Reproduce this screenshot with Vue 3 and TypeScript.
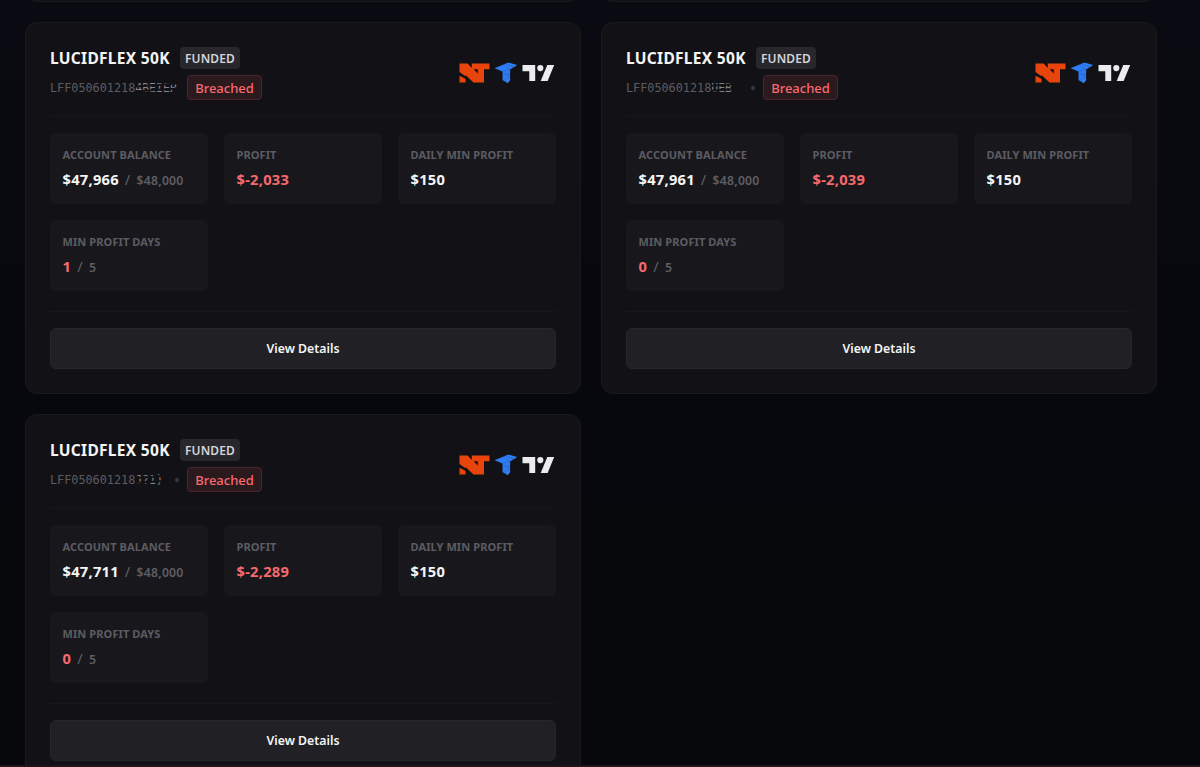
<template>
  <div class="page">
    <div class="grid previous-row">
      <div class="card"></div>
      <div class="card"></div>
    </div>

    <div class="grid">
      <div v-for="account in accounts" :key="account.id" class="card">
        <div class="card-header">
          <div class="account-info">
            <div class="title-row">
              <h3>LUCIDFLEX 50K</h3>
              <span class="stage-badge">FUNDED</span>
            </div>
            <div class="id-row">
              <span class="account-id">LFF050601218</span>
              <span class="masked-id">{{ account.masked }}</span>
              <span v-if="account.showDot" class="dot"></span>
              <span class="status-badge">Breached</span>
            </div>
          </div>

          <div class="platforms">
            <svg width="31" height="20" viewBox="0 0 31 20">
              <path
                fill="#e8440c"
                fill-rule="evenodd"
                d="M.5.5h8l4.3 4.2V.5h17.7v5.8H25v13.2H14.6L6.4 12v1.3L.5 9zM15.2 6.3v.6l3.6 3.6V6.3zM.5 12.8l6 3v3.7h-6z"
              />
            </svg>
            <svg width="24" height="22" viewBox="0 0 24 22">
              <path fill="#2f7df4" d="M.5 6.3 14.5.6l8.8 2.5-7.2 4.5v10.6l-2.2 3.1-5.4-3.2V9.4z" />
              <path
                fill="none"
                stroke="#1f5fc4"
                stroke-width=".6"
                d="M8.5 9.4l7.6-1.8-7-4.8M8.5 13.6l7.6-2M8.5 9.4l7.6 5.2M8.5 18.1l7.6-3.5M11.5 1.9l8.4 3.3"
              />
            </svg>
            <svg width="33" height="18" viewBox="0 0 33 18">
              <path fill="#ececee" d="M.5 1h12.7v16H7.3V7.2H.5zM25.3 1h6.9l-6.6 16h-6.9z" />
              <circle cx="18.3" cy="4.1" r="3.1" fill="#ececee" />
            </svg>
          </div>
        </div>

        <div class="stats">
          <div class="stat">
            <div class="stat-label">ACCOUNT BALANCE</div>
            <div class="stat-value">
              {{ account.balance }}<span class="slash">/</span><span class="limit">$48,000</span>
            </div>
          </div>
          <div class="stat">
            <div class="stat-label">PROFIT</div>
            <div class="stat-value negative">{{ account.profit }}</div>
          </div>
          <div class="stat">
            <div class="stat-label">DAILY MIN PROFIT</div>
            <div class="stat-value">$150</div>
          </div>
          <div class="stat">
            <div class="stat-label">MIN PROFIT DAYS</div>
            <div class="stat-value">
              <span class="negative">{{ account.days }}</span><span class="slash">/</span><span class="limit">5</span>
            </div>
          </div>
        </div>

        <div class="card-footer">
          <button class="details-btn">View Details</button>
        </div>
      </div>
    </div>
    <div class="bottom-edge"></div>
  </div>
</template>

<script setup lang="ts">
interface Account {
  id: number
  masked: string
  showDot: boolean
  balance: string
  profit: string
  days: number
}

const accounts: Account[] = [
  { id: 1, masked: '4BEIEP', showDot: false, balance: '$47,966', profit: '$-2,033', days: 1 },
  { id: 2, masked: 'UEB', showDot: true, balance: '$47,961', profit: '$-2,039', days: 0 },
  { id: 3, masked: 'J?1)', showDot: true, balance: '$47,711', profit: '$-2,289', days: 0 }
]
</script>

<style>
body {
  margin: 0;
  background: #07080c;
}
</style>

<style scoped>
.page {
  position: relative;
  box-sizing: border-box;
  height: 767px;
  padding: 0 43px 0 25px;
  overflow: hidden;
  background: linear-gradient(180deg, #0a0b12 0%, #07080d 50%, #06080b 100%);
  font-family: "Noto Sans", "Open Sans", sans-serif;
  color: #f4f4f5;
}

.grid {
  display: grid;
  grid-template-columns: 1fr 1fr;
  gap: 20px;
}

.previous-row {
  height: 60px;
  margin-top: -58px;
  margin-bottom: 20px;
}

.card {
  box-sizing: border-box;
  padding: 24px;
  background: #121216;
  border: 1px solid #1a1a1e;
  border-radius: 12px;
}

.card-header {
  display: flex;
  justify-content: space-between;
  height: 69px;
  border-bottom: 1px solid #18181c;
}

.title-row {
  display: flex;
  align-items: center;
  gap: 10px;
  height: 22px;
}

.title-row h3 {
  width: 120px;
  margin: 0;
  font-size: 15.5px;
  font-weight: 700;
  letter-spacing: 0.3px;
  line-height: 23px;
  white-space: nowrap;
}

.stage-badge {
  box-sizing: border-box;
  width: 60px;
  height: 22px;
  border-radius: 4px;
  background: #27272c;
  color: #d4d4d8;
  font-size: 12px;
  font-weight: 600;
  letter-spacing: 0.15px;
  line-height: 23px;
  text-align: center;
}

.id-row {
  display: flex;
  align-items: center;
  width: 212px;
  height: 25px;
  margin-top: 6px;
}

.account-id,
.masked-id {
  font-family: "DejaVu Sans Mono", "Liberation Mono", monospace;
  font-size: 12px;
  line-height: 20px;
  color: #5c5c62;
}

.account-id {
  font-size: 11.8px;
}

.masked-id {
  position: relative;
  font-size: 11.5px;
  color: #85858b;
}

/* strikes that hide the last digits */
.masked-id::before,
.masked-id::after {
  content: "";
  position: absolute;
  left: 0;
  right: 0;
  top: 6px;
  height: 2px;
  background: #121216;
  transform: rotate(-4deg);
}

.masked-id::after {
  top: 11px;
}

.dot {
  width: 4px;
  height: 4px;
  margin-left: auto;
  margin-right: 8px;
  border-radius: 50%;
  background: #3a3a40;
}

.status-badge {
  box-sizing: border-box;
  flex-shrink: 0;
  width: 75px;
  height: 25px;
  margin-left: auto;
  border: 1px solid #4c252b;
  border-radius: 4px;
  background: #2a1a1e;
  color: #f8696d;
  font-size: 13px;
  font-weight: 500;
  line-height: 25px;
  text-align: center;
}

.dot + .status-badge {
  margin-left: 0;
}

.platforms {
  display: flex;
  align-items: center;
  gap: 4px;
  height: 52px;
  margin-right: 1px;
}

.stats {
  display: grid;
  grid-template-columns: repeat(3, 1fr);
  gap: 16px;
  margin-top: 16px;
}

.stat {
  box-sizing: border-box;
  height: 71px;
  padding: 13px 12.5px 0;
  border-radius: 6px;
  background: #18181c;
}

.stat-label {
  font-size: 11px;
  font-weight: 700;
  letter-spacing: 0.1px;
  line-height: 17px;
  color: #5c5c62;
  white-space: nowrap;
}

.stat-value {
  margin-top: 5px;
  font-size: 14.7px;
  font-weight: 700;
  letter-spacing: 0.25px;
  line-height: 22px;
  white-space: nowrap;
}

.negative {
  color: #f8696d;
}

.slash {
  margin: 0 6px;
  font-weight: 400;
  color: #5f5f65;
}

.limit {
  font-size: 12.2px;
  font-weight: 600;
  color: #5f5f65;
}

.card-footer {
  margin-top: 20px;
  padding-top: 16px;
  border-top: 1px solid #18181c;
}

.details-btn {
  display: block;
  width: 100%;
  height: 41px;
  border: 1px solid #27272b;
  border-radius: 6px;
  background: #212125;
  color: #f4f4f5;
  font-family: inherit;
  font-size: 12.3px;
  font-weight: 600;
  cursor: pointer;
}

.bottom-edge {
  position: absolute;
  left: 0;
  right: 0;
  bottom: 0;
  height: 2px;
  background: #1b171a;
}
</style>
